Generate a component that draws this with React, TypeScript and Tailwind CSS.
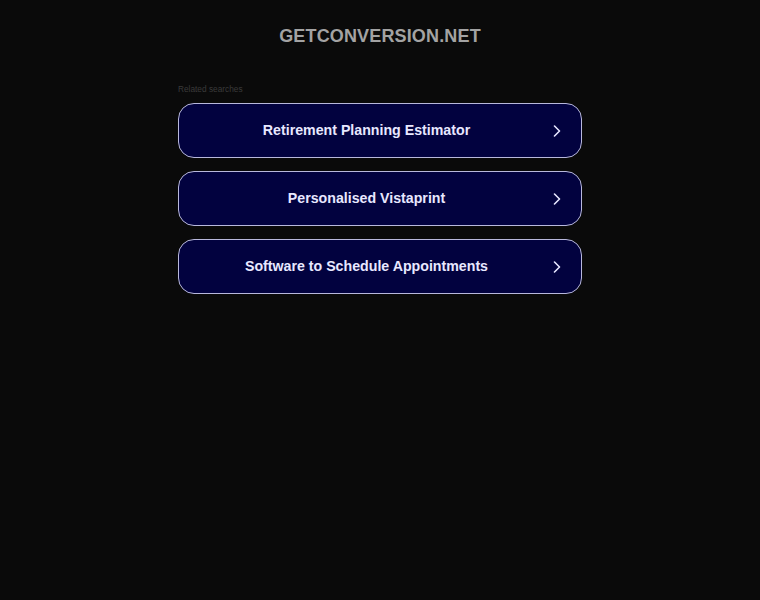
const searches = [
  "Retirement Planning Estimator",
  "Personalised Vistaprint",
  "Software to Schedule Appointments",
];

function Chevron() {
  return (
    <svg width="8" height="12" viewBox="0 0 8 12" fill="none" className="ml-[21px] shrink-0">
      <path d="M1.5 1 L6.5 6 L1.5 11" stroke="#e6e6ff" strokeWidth="1.6" strokeLinecap="round" strokeLinejoin="round" />
    </svg>
  );
}

export default function App() {
  return (
    <div className="min-h-screen w-full bg-[#0a0a0a] font-['Liberation_Sans',Arial,sans-serif]">
      <div className="pt-[26px] text-center">
        <h1 className="text-[18px] leading-[20px] font-bold tracking-[0.15px] text-[#a3a3a3]">GETCONVERSION.NET</h1>
      </div>
      <div className="mx-auto mt-[38px] w-[404px]">
        <p className="text-[8.3px] leading-[10px] text-[#3a3a3a]">Related searches</p>
        <div className="mt-[9px] flex flex-col gap-[13px]">
          {searches.map((s) => (
            <a
              key={s}
              href="#"
              className="flex h-[55px] items-center rounded-[16px] border border-[#b8b8dc] bg-[#02023f] pl-[22px] pr-[20px] pt-[1px]"
            >
              <span className="flex-1 text-center text-[14.2px] font-bold text-[#e8e8ff]">{s}</span>
              <Chevron />
            </a>
          ))}
        </div>
      </div>
    </div>
  );
}
